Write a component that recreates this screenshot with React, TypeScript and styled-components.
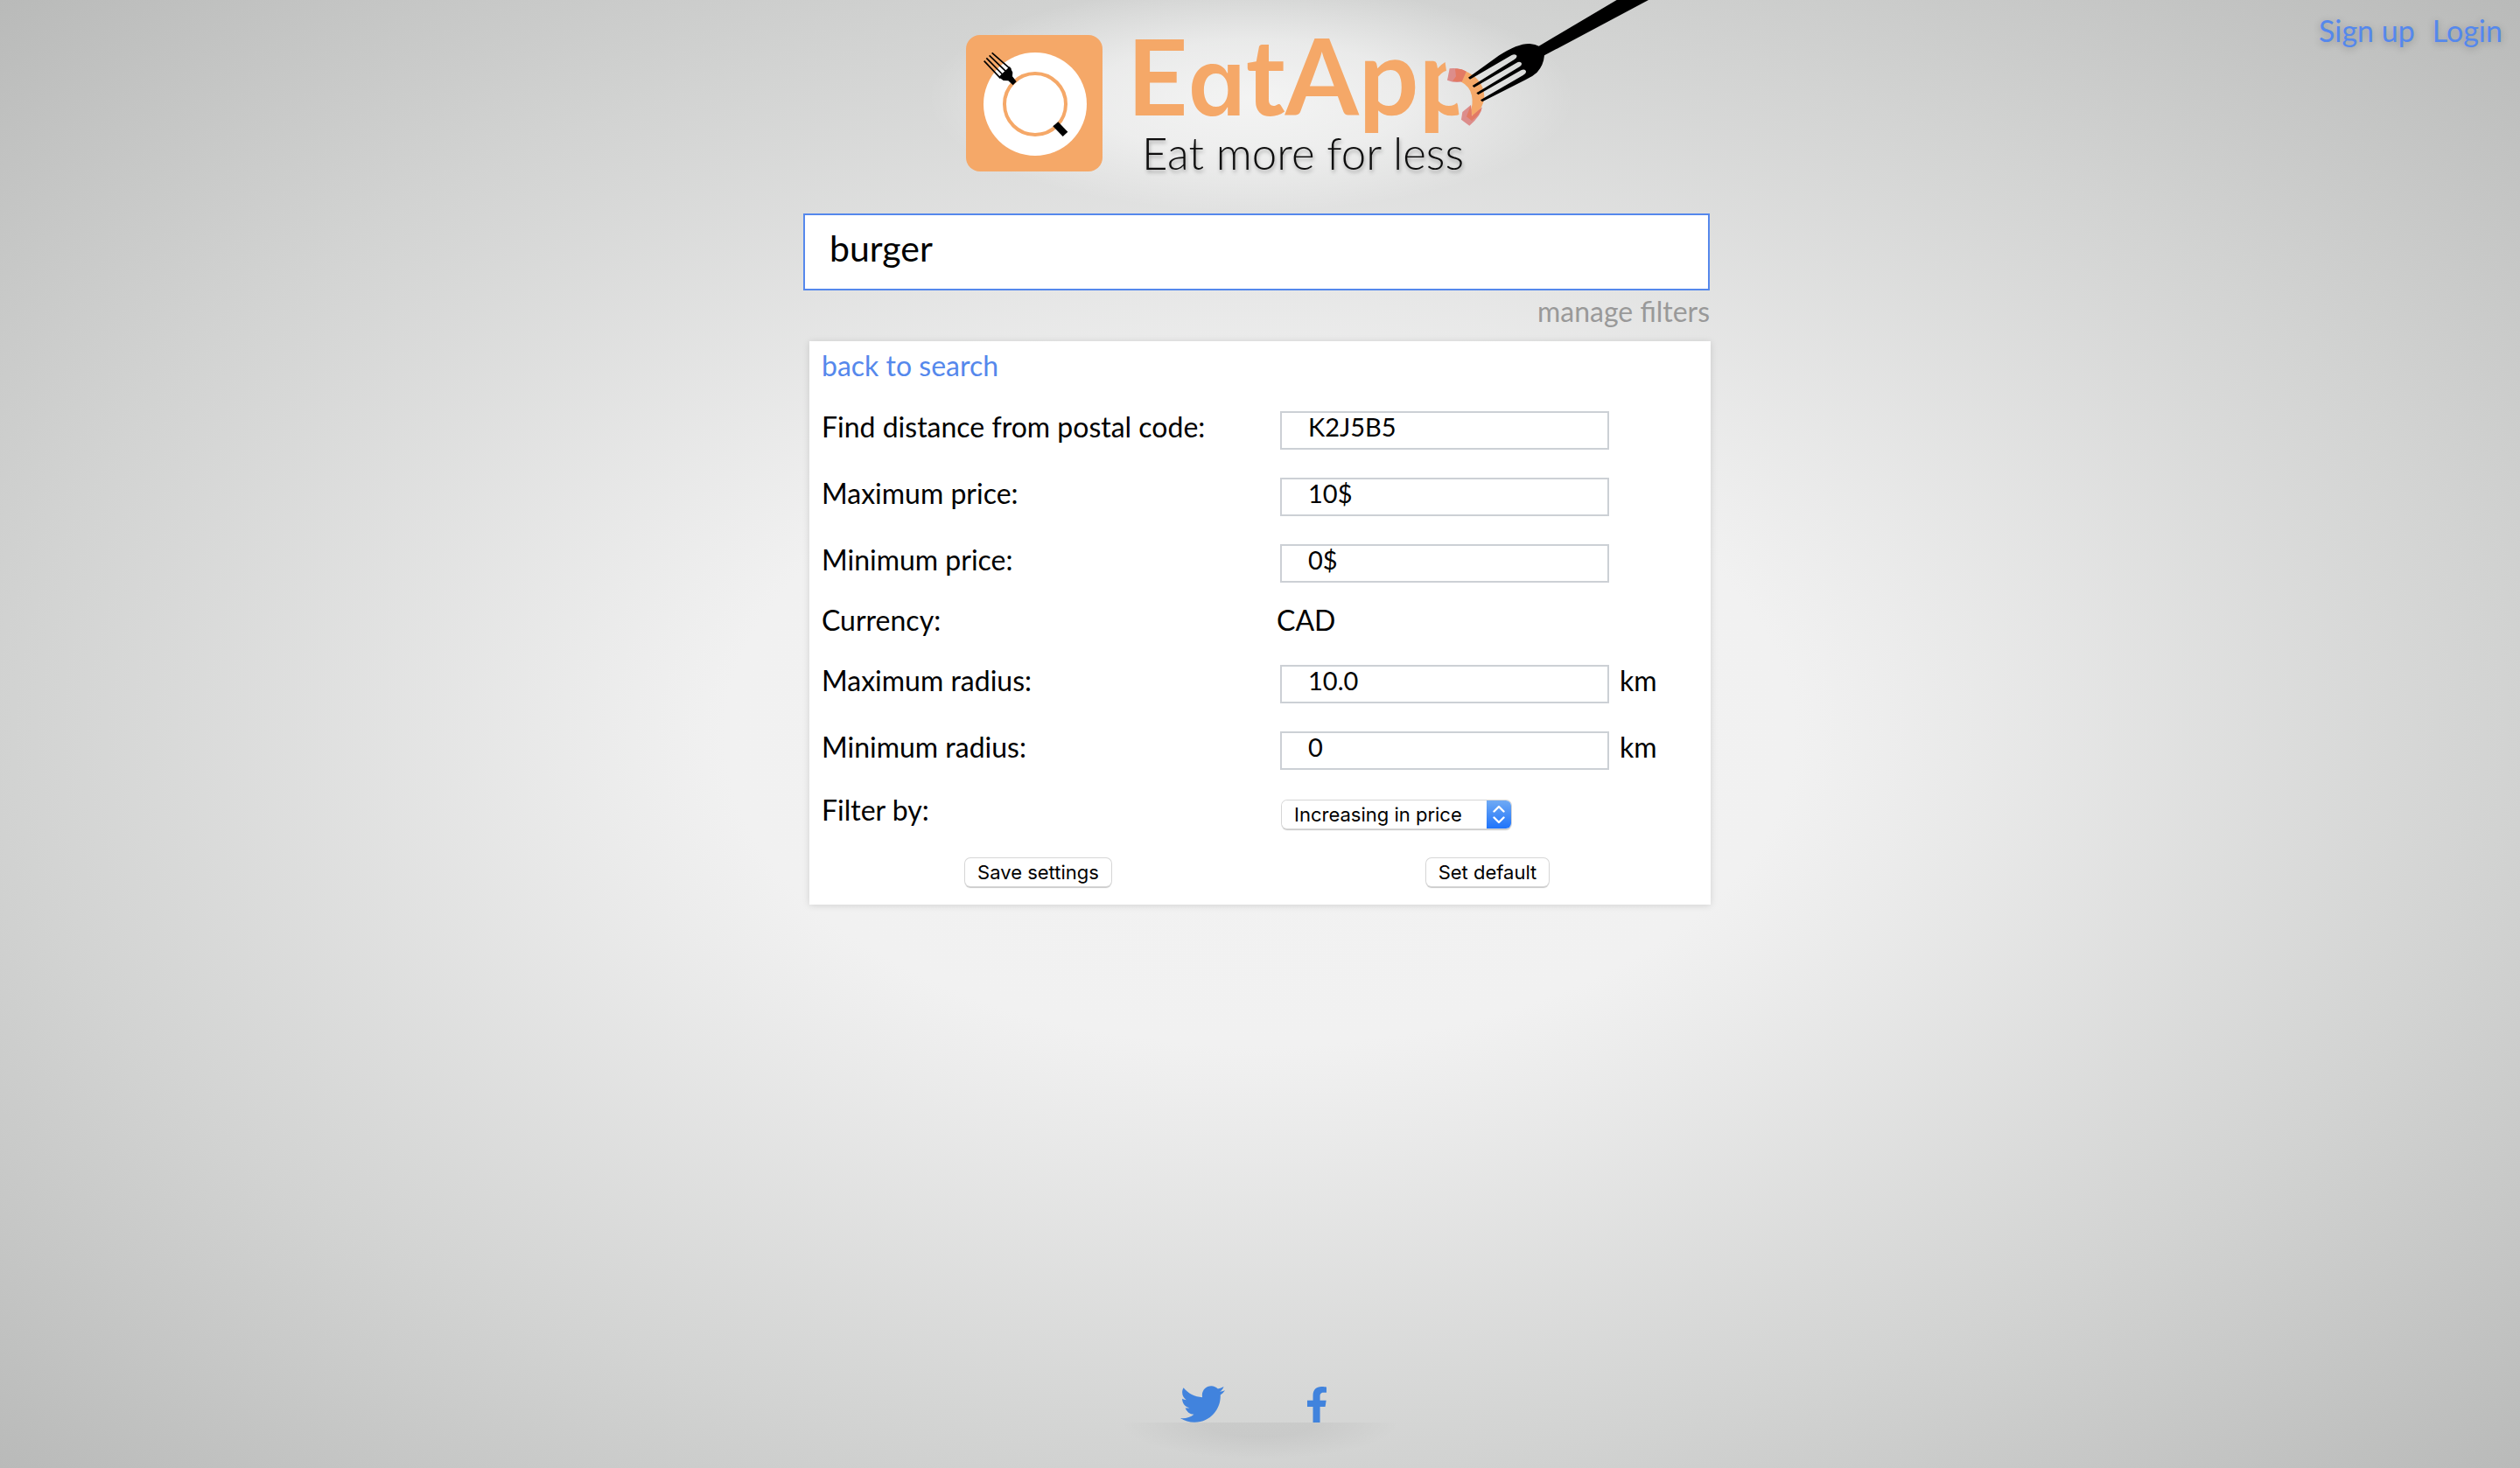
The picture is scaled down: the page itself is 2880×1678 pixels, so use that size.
import React from "react";
import styled, { createGlobalStyle } from "styled-components";
import { FaFacebookF, FaTwitter } from "react-icons/fa";

const colors = {
  blue: "#5588ec",
  orange: "#f5a868",
  muted: "#999999",
  border: "#ccd0d5",
};

const GlobalStyle = createGlobalStyle`
  *, *::before, *::after { box-sizing: border-box; }
  body {
    margin: 0;
    font-family: Lato, "Liberation Sans", sans-serif;
    font-size: 32px;
    line-height: 40px;
    color: #000;
  }
`;

const Page = styled.div`
  min-height: 100vh;
  display: flex;
  flex-direction: column;
  background: radial-gradient(ellipse farthest-corner at center, #f2f2f2 0%, #f1f1f1 30%, #d2d3d2 70%, #b9bab9 100%);
`;

const Header = styled.header`
  display: grid;
  grid-template-columns: 1fr minmax(0, 1044px) 1fr;
`;

const Brand = styled.a`
  grid-column: 2;
  display: block;
  padding-left: 100px;
`;

const LogoSvg = styled.svg`
  display: block;
  width: 904px;
  height: 244px;
`;

const Account = styled.nav`
  display: flex;
  justify-content: flex-end;
  gap: 20px;
  padding: 15px 20px;
  font-size: 34px;
`;

const TextLink = styled.a<{ $tone?: "muted"; $shadow?: boolean }>`
  color: ${(p) => (p.$tone === "muted" ? colors.muted : colors.blue)};
  text-decoration: none;
  text-shadow: ${(p) => (p.$shadow ? "0 2px 8px rgba(0, 0, 0, 0.25)" : "none")};
`;

const Main = styled.main`
  flex: 1;
  width: 100%;
  max-width: 1044px;
  margin: 0 auto;
`;

const Search = styled.form`
  display: flex;
  flex-direction: column;
  align-items: flex-end;
  gap: 4px;
  padding-right: 8px;
`;

const SearchInput = styled.input`
  width: 100%;
  height: 88px;
  padding: 0 28px 10px;
  border: 2px solid ${colors.blue};
  border-radius: 0;
  outline: none;
  background: #fff;
  font: inherit;
  font-size: 41px;
  line-height: 48px;
`;

const Card = styled.form`
  margin: 14px 7px 0;
  padding: 0 14px 4px;
  background: #fff;
  box-shadow: 0 1px 8px rgba(0, 0, 0, 0.13);
`;

const Row = styled.div<{ $height: number }>`
  display: grid;
  grid-template-columns: 520fr 482fr;
  align-items: center;
  min-height: ${(p) => p.$height}px;
`;

const Caption = styled.label`
  padding-bottom: 8px;
`;

const Value = styled.span`
  padding-bottom: 8px;
`;

const Field = styled.div`
  display: flex;
  align-items: center;
  gap: 12px;
  padding-left: 4px;
`;

const FieldInput = styled.input`
  width: 376px;
  height: 44px;
  padding: 0 30px 10px;
  border: 2px solid ${colors.border};
  border-radius: 0;
  background: #fff;
  font: inherit;
  font-size: 29px;
  line-height: 28px;
`;

const SelectBox = styled.div`
  display: grid;
  grid-template-columns: 1fr 28px;
  width: 262px;
  height: 32px;
  margin: 2px 2px 0;
  border-radius: 6px;
  overflow: hidden;
  box-shadow: 0 0 0 1px #d6d6d6, 0 2px 1px rgba(0, 0, 0, 0.22);
`;

const Select = styled.select`
  grid-area: 1 / 1 / 2 / 3;
  appearance: none;
  padding: 0 14px;
  border: 0;
  background: #fff;
  color: #000;
  font-family: Inter, "Liberation Sans", sans-serif;
  font-size: 22px;
  line-height: 32px;
`;

const Stepper = styled.span`
  grid-area: 1 / 2;
  display: grid;
  place-items: center;
  background: linear-gradient(#6faaf4, #1f74fb);
  pointer-events: none;
`;

const Actions = styled.div`
  display: grid;
  grid-template-columns: 495fr 482fr;
  column-gap: 25px;
  align-items: center;
  justify-items: center;
  min-height: 66px;
`;

const Button = styled.button`
  height: 32px;
  padding: 0 14px;
  border: 0;
  border-radius: 6px;
  background: #fff;
  color: #000;
  box-shadow: 0 0 0 1px #d6d6d6, 0 2px 1px rgba(0, 0, 0, 0.22);
  font-family: Inter, "Liberation Sans", sans-serif;
  font-size: 22px;
  line-height: 32px;
`;

const Footer = styled.footer`
  display: flex;
  flex-direction: column;
  align-items: center;
`;

const Social = styled.nav`
  display: flex;
  align-items: flex-end;
  justify-content: center;
  gap: 92px;
  padding-right: 14px;
  color: #4183dd;
`;

const SocialLink = styled.a`
  display: block;
  color: inherit;
  svg { display: block; }
`;

const FooterShade = styled.div`
  width: 320px;
  height: 52px;
  background: radial-gradient(ellipse 50% 80% at 50% 0%, rgba(0, 0, 0, 0.05) 40%, rgba(0, 0, 0, 0) 100%);
`;

function Logo() {
  return (
    <LogoSvg viewBox="1018 0 904 244" role="img" aria-label="EatApp, Eat more for less">
      <defs>
        <radialGradient id="glow">
          <stop offset="0" stopColor="#fff" stopOpacity="0.7" />
          <stop offset="0.5" stopColor="#fff" stopOpacity="0.5" />
          <stop offset="1" stopColor="#fff" stopOpacity="0" />
        </radialGradient>
        <mask id="bite" maskUnits="userSpaceOnUse" x="1018" y="0" width="904" height="244">
          <rect x="1018" y="0" width="904" height="244" fill="#fff" />
          <path d="M1650 60 L1654 88 L1666 120 L1670 150 H1740 V60 Z" fill="#000" />
        </mask>
        <filter id="soft" x="-10%" y="-20%" width="120%" height="160%">
          <feDropShadow dx="1" dy="3" stdDeviation="2" floodOpacity="0.3" />
        </filter>
      </defs>
      <ellipse cx="1430" cy="112" rx="370" ry="130" fill="url(#glow)" />

      <rect x="1104" y="40" width="156" height="156" rx="16" fill={colors.orange} />
      <circle cx="1183" cy="119" r="59" fill="#fff" />
      <circle cx="1183" cy="119" r="35" fill="none" stroke={colors.orange} strokeWidth="4" />
      <g transform="translate(1080 0) scale(0.33333)">
        <path d="M222 228 L232 248 L231 262 L245 280 L233 292 L217 277 L200 276 L184 264 Z" />
        <path
          d="M134 209 L190 268 M142 199 L200 258 M152 190 L212 248 M161 181 L226 238"
          stroke="#000"
          strokeWidth="5"
        />
        <path d="M388 418 L421 452 L404 468 L370 433 Z" />
      </g>

      <text
        x="1288"
        y="132"
        fill={colors.orange}
        mask="url(#bite)"
        fontFamily="Lato, sans-serif"
        fontSize="121"
        fontWeight="700"
      >
        E
        <tspan fontFamily="Inter, sans-serif" fontSize="106" fontWeight="600" style={{ fontFeatureSettings: '"cv11" 1' }}>a</tspan>
        tApp
      </text>
      <g transform="translate(1480 0) scale(0.33333)">
        <path d="M580 242 Q646 268 649 330 Q648 372 610 398 L600 386 Q612 360 606 328 Q600 296 568 280 Z" fill={colors.orange} />
        <path d="M530 235 Q560 231 587 245 L572 280 Q548 286 522 275 Z" fill="#dc8d8b" />
        <path d="M549 236 Q570 234 587 245 L572 280 L540 278 L552 262 Z" fill="#e37a63" />
        <path d="M603 360 L606 398 L641 368 Q640 394 598 431 L570 410 L574 384 Z" fill="#dc8d8b" />
        <path d="M603 360 L606 398 L641 368 Q636 392 606 414 L588 400 Z" fill="#e37a63" />
        <path d="M594 266 L700 190 Q765 148 805 150 Q825 152 836 158 L1103 0 L1212 0 L855 190 Q852 225 830 248 Q815 262 790 274 L642 349 L636 343 L782 258 Q796 250 791 242 Q785 236 775 241 L628 325 L622 319 L770 229 Q780 222 776 215 Q769 210 760 215 L614 300 L608 294 L752 204 Q764 196 759 189 Q752 184 743 189 L600 272 Z" />
      </g>

      <text
        x="1305"
        y="194"
        fill="#111"
        filter="url(#soft)"
        fontFamily="Lato, sans-serif"
        fontSize="51"
        fontWeight="300"
      >
        Eat more for less
      </text>
    </LogoSvg>
  );
}

type FieldRowProps = { id: string; label: string; value: string; unit?: string };

function FieldRow({ id, label, value, unit }: FieldRowProps) {
  return (
    <Row $height={76}>
      <Caption htmlFor={id}>{label}</Caption>
      <Field>
        <FieldInput id={id} type="text" defaultValue={value} />
        {unit && <Value>{unit}</Value>}
      </Field>
    </Row>
  );
}

export default function App() {
  return (
    <>
      <GlobalStyle />
      <Page>
        <Header>
          <Brand href="#">
            <Logo />
          </Brand>
          <Account>
            <TextLink href="#signup" $shadow>Sign up</TextLink>
            <TextLink href="#login" $shadow>Login</TextLink>
          </Account>
        </Header>
        <Main>
          <Search>
            <SearchInput type="text" aria-label="Search" defaultValue="burger" />
            <TextLink href="#filters" $tone="muted">manage filters</TextLink>
          </Search>
          <Card>
            <Row $height={64}>
              <Value>
                <TextLink href="#search">back to search</TextLink>
              </Value>
            </Row>
            <FieldRow id="postal" label="Find distance from postal code:" value="K2J5B5" />
            <FieldRow id="max-price" label="Maximum price:" value="10$" />
            <FieldRow id="min-price" label="Minimum price:" value="0$" />
            <Row $height={62}>
              <Value>Currency:</Value>
              <Value>CAD</Value>
            </Row>
            <FieldRow id="max-radius" label="Maximum radius:" value="10.0" unit="km" />
            <FieldRow id="min-radius" label="Minimum radius:" value="0" unit="km" />
            <Row $height={68}>
              <Caption htmlFor="filter-by">Filter by:</Caption>
              <Field>
                <SelectBox>
                  <Select id="filter-by" defaultValue="price-asc">
                    <option value="price-asc">Increasing in price</option>
                  </Select>
                  <Stepper>
                    <svg width="14" height="22" viewBox="0 0 14 22" fill="none" stroke="#fff" strokeWidth="2.4" strokeLinecap="round" strokeLinejoin="round">
                      <path d="M1.5 7.5 L7 2 L12.5 7.5 M1.5 14.5 L7 20 L12.5 14.5" />
                    </svg>
                  </Stepper>
                </SelectBox>
              </Field>
            </Row>
            <Actions>
              <Button type="button">Save settings</Button>
              <Button type="button">Set default</Button>
            </Actions>
          </Card>
        </Main>
        <Footer>
          <Social>
            <SocialLink href="#twitter" aria-label="Twitter">
              <FaTwitter size={51} viewBox="0 46 512 420" style={{ height: 42 }} />
            </SocialLink>
            <SocialLink href="#facebook" aria-label="Facebook">
              <FaFacebookF size={41} style={{ width: 26 }} />
            </SocialLink>
          </Social>
          <FooterShade />
        </Footer>
      </Page>
    </>
  );
}
